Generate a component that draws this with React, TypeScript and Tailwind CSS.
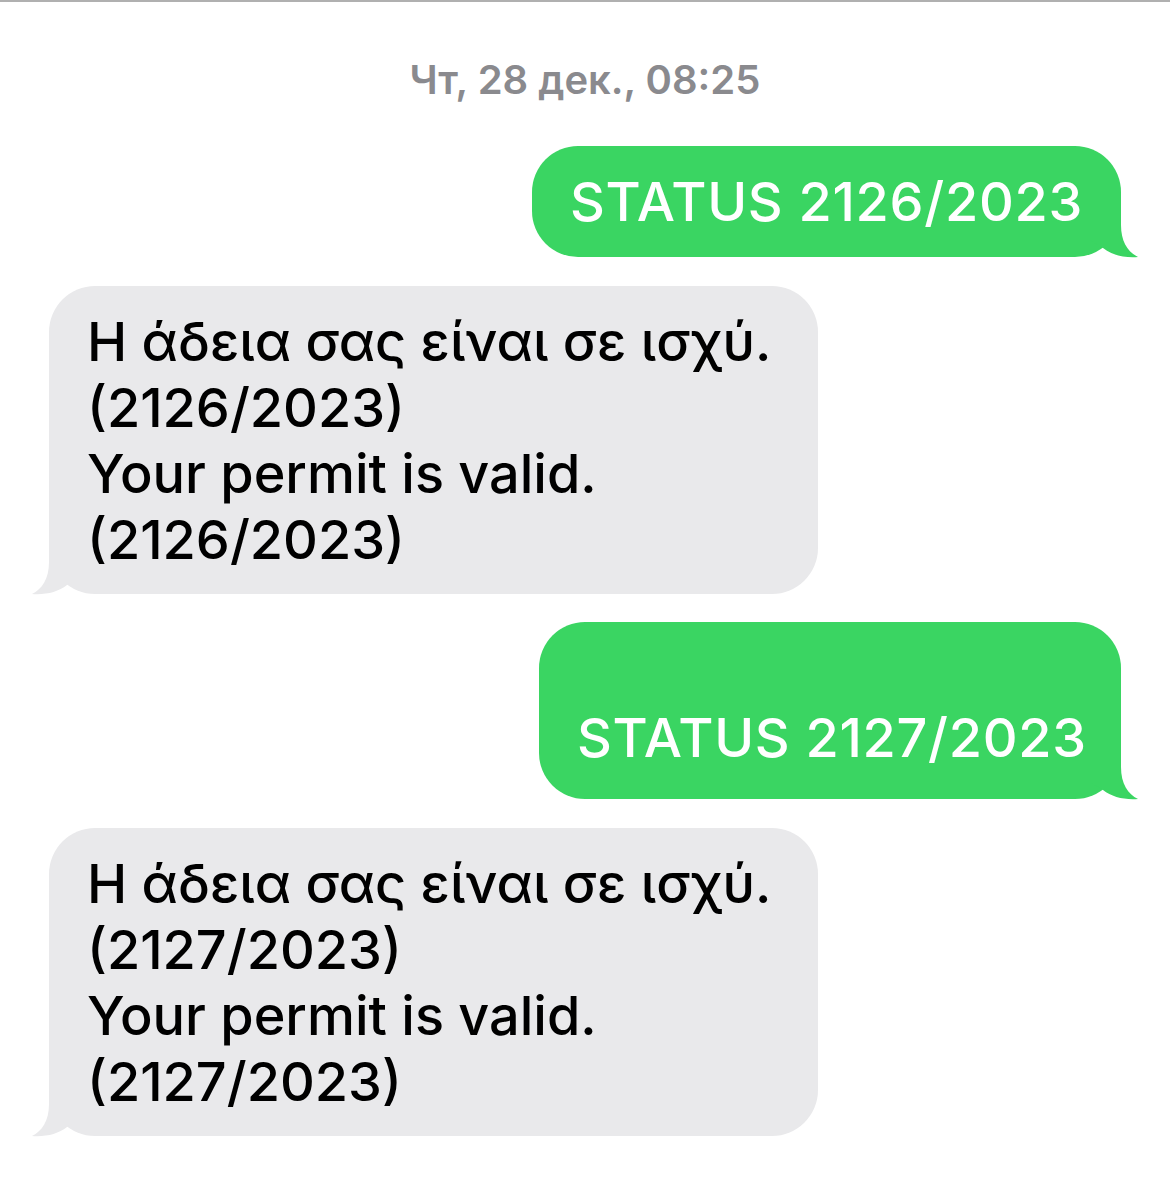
import React from "react";

const font = { fontFamily: "Inter, 'Noto Sans', 'Liberation Sans', sans-serif" };

function GreenTail() {
  return (
    <svg
      className="absolute right-[-20px] bottom-[-2px] overflow-visible"
      width="60"
      height="60"
      viewBox="0 0 60 60"
    >
      <path
        d="M40 1 L40 26 C40 43 47 53 57 58 C43 59 31 56 22 49 L9 41 L9 1 Z"
        fill="#3ad562"
      />
    </svg>
  );
}

function GreyTail() {
  return (
    <svg
      className="absolute left-[-20px] bottom-[-2px] overflow-visible"
      width="60"
      height="60"
      viewBox="0 0 60 60"
    >
      <path
        d="M20 1 L20 26 C20 43 13 53 3 58 C17 59 29 56 38 49 L51 41 L51 1 Z"
        fill="#e9e9eb"
      />
    </svg>
  );
}

function Outgoing({ text, width, extraTop }: { text: string; width: string; extraTop?: boolean }) {
  return (
    <div className="flex justify-end pr-[49px]">
      <div
        className={
          "relative rounded-[46px] bg-[#3ad562] text-white text-[54px] font-medium tracking-[0.7px] leading-[66px] pl-[38px] pr-[20px] whitespace-nowrap " +
          (extraTop ? "pt-[83px] pb-[28px] " : "pt-[23px] pb-[22px] ") +
          width
        }
      >
        <GreenTail />
        <span className="relative">{text}</span>
      </div>
    </div>
  );
}

function Incoming({ lines }: { lines: string[] }) {
  return (
    <div className="flex justify-start pl-[49px]">
      <div className="relative w-[769px] rounded-[46px] bg-[#e9e9eb] text-black text-[54px] font-medium leading-[66px] pl-[38px] pr-[30px] pt-[23px] pb-[21px]">
        <GreyTail />
        <div className="relative">
          {lines.map((l, i) => (
            <div key={i} className="whitespace-nowrap">
              {l}
            </div>
          ))}
        </div>
      </div>
    </div>
  );
}

export default function App() {
  return (
    <div className="w-[1170px] h-[1188px] bg-white overflow-hidden" style={font}>
      <div className="h-[2px] bg-[#b0b0b0]" />
      <div className="pt-[55px] flex justify-center">
        <div className="text-[40px] leading-[46px] font-semibold text-[#8a8a8e]">
          Чт, 28 дек., 08:25
        </div>
      </div>
      <div className="mt-[43px] flex flex-col">
        <Outgoing text="STATUS 2126/2023" width="w-[589px]" />
        <div className="mt-[29px]">
          <Incoming
            lines={[
              "Η άδεια σας είναι σε ισχύ.",
              "(2126/2023)",
              "Your permit is valid.",
              "(2126/2023)",
            ]}
          />
        </div>
        <div className="mt-[28px]">
          <Outgoing text="STATUS 2127/2023" width="w-[582px]" extraTop />
        </div>
        <div className="mt-[29px]">
          <Incoming
            lines={[
              "Η άδεια σας είναι σε ισχύ.",
              "(2127/2023)",
              "Your permit is valid.",
              "(2127/2023)",
            ]}
          />
        </div>
      </div>
    </div>
  );
}
